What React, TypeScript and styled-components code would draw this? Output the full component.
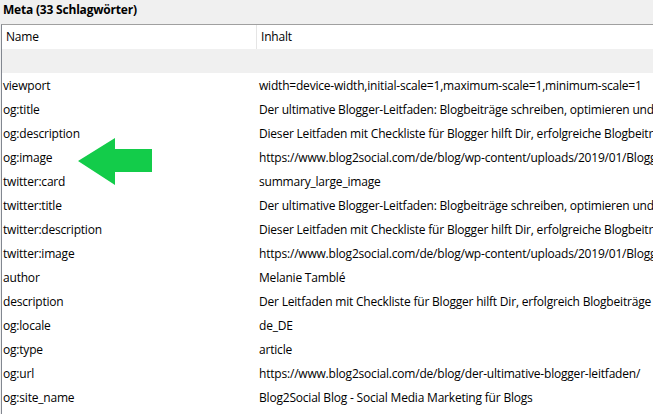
import * as React from 'react';
import styled, { createGlobalStyle } from 'styled-components';

const GlobalStyle = createGlobalStyle`
  html, body {
    margin: 0;
    padding: 0;
    background: #f0f0f0;
    overflow: hidden;
  }
  body {
    font-family: "Open Sans", "Noto Sans", sans-serif;
    font-size: 12px;
    letter-spacing: -0.2px;
    color: #000;
  }
`;

const metaRows: [string, string][] = [
  ['viewport', 'width=device-width,initial-scale=1,maximum-scale=1,minimum-scale=1'],
  ['og:title', 'Der ultimative Blogger-Leitfaden: Blogbeiträge schreiben, optimieren und erfolgreich verbreiten'],
  ['og:description', 'Dieser Leitfaden mit Checkliste für Blogger hilft Dir, erfolgreiche Blogbeiträge zu schreiben'],
  ['og:image', 'https://www.blog2social.com/de/blog/wp-content/uploads/2019/01/Blogger-Leitfaden.png'],
  ['twitter:card', 'summary_large_image'],
  ['twitter:title', 'Der ultimative Blogger-Leitfaden: Blogbeiträge schreiben, optimieren und erfolgreich verbreiten'],
  ['twitter:description', 'Dieser Leitfaden mit Checkliste für Blogger hilft Dir, erfolgreiche Blogbeiträge zu schreiben'],
  ['twitter:image', 'https://www.blog2social.com/de/blog/wp-content/uploads/2019/01/Blogger-Leitfaden.png'],
  ['author', 'Melanie Tamblé'],
  ['description', 'Der Leitfaden mit Checkliste für Blogger hilft Dir, erfolgreich Blogbeiträge zu schreiben'],
  ['og:locale', 'de_DE'],
  ['og:type', 'article'],
  ['og:url', 'https://www.blog2social.com/de/blog/der-ultimative-blogger-leitfaden/'],
  ['og:site_name', 'Blog2Social Blog - Social Media Marketing für Blogs'],
  ['', ''],
];

const Panel = styled.div`
  width: 653px;
  height: 414px;
  display: flex;
  flex-direction: column;
  background: #f0f0f0;
  position: relative;
`;

const Title = styled.div`
  height: 24px;
  line-height: 19px;
  padding-left: 3px;
  font-weight: 700;
  white-space: nowrap;
`;

const Grid = styled.div`
  flex: 1;
  margin-left: 1px;
  background: #fff;
  border-top: 1px solid #a0a0a0;
  border-left: 1px solid #828790;
  overflow: hidden;
`;

const Row = styled.div<{ $shade?: boolean }>`
  display: grid;
  grid-template-columns: 254px 1fr;
  height: 24px;
  align-items: center;
  white-space: nowrap;
  background: ${p => (p.$shade ? '#f0f0f0' : '#fff')};
`;

const HeaderCell = styled.div<{ $divider?: boolean }>`
  height: 100%;
  line-height: 23px;
  padding-left: 4px;
  border-left: ${p => (p.$divider ? '1px solid #e5e5e5' : 'none')};
  overflow: hidden;
`;

const Cell = styled.div<{ $value?: boolean }>`
  padding-left: ${p => (p.$value ? '3px' : '1px')};
  overflow: hidden;
`;

const Arrow = styled.svg`
  position: absolute;
  left: 78px;
  top: 138px;
`;

export default function App() {
  return (
    <>
      <GlobalStyle />
      <Panel>
        <Title>Meta (33 Schlagwörter)</Title>
        <Grid>
          <Row>
            <HeaderCell>Name</HeaderCell>
            <HeaderCell $divider>Inhalt</HeaderCell>
          </Row>
          <Row $shade />
          {metaRows.map(([name, content], index) => (
            <Row key={index}>
              <Cell>{name}</Cell>
              <Cell $value>{content}</Cell>
            </Row>
          ))}
        </Grid>
        <Arrow width="75" height="48" viewBox="0 0 75 48">
          <polygon points="0,23 37,0 37,11 74,11 74,34 37,34 37,47" fill="#13cc4a" />
        </Arrow>
      </Panel>
    </>
  );
}
